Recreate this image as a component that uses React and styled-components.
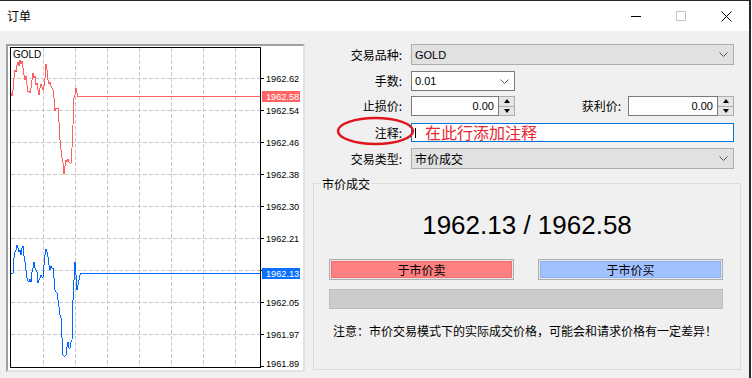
import React from "react";
import styled, { createGlobalStyle } from "styled-components";

const GlobalStyle = createGlobalStyle`
  html, body { margin: 0; padding: 0; background: #ffffff; }
  body { font-family: "Noto Sans CJK SC", "Noto Sans", sans-serif; color: #000; }
  * { box-sizing: border-box; }
`;

const CJK = `"Noto Sans CJK SC", "Noto Sans", sans-serif`;
const LATIN = `"Liberation Sans", "Noto Sans CJK SC", sans-serif`;

const Window = styled.div`
  width: 751px;
  height: 378px;
  border-top: 1px solid #262626;
  border-right: 2px solid #262626;
  background: #f0f0f0;
  display: flex;
  flex-direction: column;
  overflow: hidden;
`;

const TitleBar = styled.div`
  height: 30px;
  flex-shrink: 0;
  background: #ffffff;
  display: flex;
  align-items: center;
`;

const Title = styled.div`
  padding-left: 7px;
  font-family: ${CJK};
  font-size: 12px;
  line-height: 14px;
`;

const Controls = styled.div`
  margin-left: auto;
  display: flex;
  height: 100%;
`;

const CtrlButton = styled.div`
  width: ${(p) => p.$w}px;
  height: 100%;
  display: flex;
  align-items: center;
  justify-content: center;
`;

const Body = styled.div`
  flex: 1;
  display: flex;
  padding: 13px 0 0 6px;
`;

const ChartPanel = styled.div`
  width: 299px;
  height: 328px;
  flex-shrink: 0;
  border: 2px solid;
  border-color: #a0a0a0 #e3e3e3 #e3e3e3 #a0a0a0;
  background: #ffffff;
`;

const ChartSvg = styled.svg`
  display: block;
  width: 295px;
  height: 324px;
`;

const Form = styled.div`
  flex: 1;
  margin-left: 8px;
  display: flex;
  flex-direction: column;
`;

const Row = styled.div`
  position: relative;
  display: flex;
  align-items: center;
  height: ${(p) => p.$h}px;
  margin-top: ${(p) => p.$mt || 0}px;
  padding-right: 15px;
`;

const Label = styled.div`
  width: ${(p) => p.$w || 89}px;
  flex-shrink: 0;
  margin-right: ${(p) => p.$mr ?? 9}px;
  text-align: right;
  font-family: ${CJK};
  font-size: 12px;
  line-height: 16px;
  white-space: nowrap;
`;

const FlexLabel = styled(Label)`
  flex: 1;
  width: auto;
`;

const Select = styled.div`
  width: ${(p) => p.$w}px;
  height: 100%;
  display: flex;
  align-items: center;
  padding: 0 5px 0 3px;
  background: ${(p) => (p.$gray ? "#e1e1e1" : "#ffffff")};
  border: 1px solid ${(p) => (p.$gray ? "#adadad" : "#7a7a7a")};
  font-family: ${(p) => (p.$cjk ? CJK : LATIN)};
  font-size: ${(p) => (p.$cjk ? 12 : 11)}px;
  line-height: 14px;
`;

const SelectText = styled.span`
  flex: 1;
`;

const SpinWrap = styled.div`
  width: ${(p) => p.$w}px;
  height: 100%;
  display: flex;
  flex-shrink: 0;
`;

const SpinField = styled.div`
  flex: 1;
  border: 1px solid #7a7a7a;
  background: #ffffff;
  text-align: right;
  padding-right: 4px;
  font-family: ${LATIN};
  font-size: 11px;
  line-height: 18px;
`;

const SpinButtons = styled.div`
  width: 16px;
  display: flex;
  flex-direction: column;
  border: 1px solid #adadad;
  border-left: none;
  background: #e5e5e5;
`;

const SpinBtn = styled.div`
  flex: 1;
  display: flex;
  align-items: center;
  justify-content: center;
  & + & { border-top: 1px solid #adadad; }
  &::after {
    content: "";
    border-left: 3px solid transparent;
    border-right: 3px solid transparent;
    ${(p) => (p.$down ? "border-top: 4px solid #000;" : "border-bottom: 4px solid #000;")}
  }
`;

const TextInput = styled.div`
  flex: 1;
  height: 100%;
  border: 1px solid #0078d7;
  background: #ffffff;
  display: flex;
  align-items: center;
  padding-left: 3px;
`;

const Caret = styled.span`
  width: 1px;
  height: 10px;
  background: #000;
  margin-right: 9px;
`;

const NoteText = styled.span`
  font-family: ${CJK};
  font-size: 16px;
  line-height: 17px;
  color: #e8262c;
`;

const Ellipse = styled.svg`
  position: absolute;
  left: 24px;
  top: -6px;
  width: 77px;
  height: 28px;
  overflow: visible;
`;

const Group = styled.fieldset`
  margin: 7px 0 0 0;
  width: 428px;
  height: 194px;
  padding: 0;
  border: 1px solid #dcdcdc;
  display: flex;
  flex-direction: column;
  align-items: stretch;
`;

const Legend = styled.legend`
  margin-left: 7px;
  padding: 0 1px;
  font-family: ${CJK};
  font-size: 12px;
  line-height: 15px;
`;

const PriceText = styled.div`
  margin-top: 19px;
  text-align: center;
  font-family: ${LATIN};
  font-size: 26px;
  line-height: 30px;
`;

const GroupInner = styled.div`
  padding: 0 17px 0 15px;
  display: flex;
  flex-direction: column;
`;

const ButtonRow = styled.div`
  display: flex;
  justify-content: space-between;
  margin-top: 19px;
`;

const TradeButton = styled.div`
  width: 185px;
  height: 21px;
  border: 1px solid #adadad;
  background: ${(p) => p.$bg};
  box-shadow: inset 0 0 0 1px #e8e8e8, inset 0 0 0 2px ${(p) => p.$edge};
  display: flex;
  align-items: center;
  justify-content: center;
  font-family: ${CJK};
  font-size: 12px;
  line-height: 14px;
`;

const Progress = styled.div`
  margin-top: 9px;
  height: 20px;
  background: #cccccc;
  border: 1px solid #bcbcbc;
`;

const Notice = styled.div`
  margin-top: 14px;
  padding-left: 4px;
  font-family: ${CJK};
  font-size: 12px;
  line-height: 16px;
  white-space: nowrap;
`;

const Chevron = () => (
  <svg width="9" height="5" viewBox="0 0 9 5">
    <polyline points="0.5,0.5 4.5,4.5 8.5,0.5" fill="none" stroke="#555" strokeWidth="1" />
  </svg>
);

const Spin = ({ w, value }) => (
  <SpinWrap $w={w}>
    <SpinField>{value}</SpinField>
    <SpinButtons>
      <SpinBtn />
      <SpinBtn $down />
    </SpinButtons>
  </SpinWrap>
);

const redPts =
  "11,93 12,96 13,90 14,78 15,70 16,72 17,65 18,62 19,66 20,60 21,64 22,61 23,68 24,75 25,80 26,76 27,85 28,92 29,91 30,93 31,88 32,80 33,73 34,78 35,76 36,85 37,83 38,90 39,95 40,88 41,84 42,87 43,90 44,86 45,78 46,64 47,70 48,80 49,84 50,82 51,86 52,88 53,90 54,98 55,111 56,108 57,108 58,108 59,122 60,140 61,150 62,158 63,163 64,174 65,166 66,160 67,162 68,159 69,162 70,163 71,163 72,148 73,125 74,98 75,95 76,88 77,93 78,96.5 260,96.5";

const bluePts =
  "11,273 13,273 14,258 15,252 16,250 17,245 18,248 19,252 20,250 21,255 22,248 23,246 24,256 25,262 26,270 27,278 28,281 29,282 30,279 31,282 32,272 33,268 34,262 35,268 36,270 37,272 38,283 39,280 40,278 41,275 42,277 43,277 44,265 45,255 46,249 47,252 48,257 49,265 50,270 51,266 52,268 53,268 54,278 55,290 56,292 57,293 58,300 59,307 60,315 61,318 62,338 63,355 64,356 65,356 66,355 67,347 68,342 69,348 70,348 71,342 72,340 73,300 74,280 75,262 76,275 77,290 78,285 79,280 80,275 81,273.5 260,273.5";

const gridX = [43.5, 75.5, 107.5, 139.5, 171.5, 203.5, 235.5];
const gridY = [78.5, 110.5, 142.5, 174.5, 206.5, 238.5, 270.5, 302.5, 334.5];
const axisLabels = [
  [78.5, "1962.62"],
  [110.5, "1962.54"],
  [142.5, "1962.46"],
  [174.5, "1962.38"],
  [206.5, "1962.30"],
  [238.5, "1962.21"],
  [302.5, "1962.05"],
  [334.5, "1961.97"],
  [363.7, "1961.89"],
];

const Chart = () => (
  <ChartSvg viewBox="8 46 295 324">
    {gridX.map((x) => (
      <line key={x} x1={x} y1={48} x2={x} y2={367} stroke="#c8c8c8" strokeDasharray="4 2" />
    ))}
    {gridY.map((y) => (
      <line key={y} x1={11} y1={y} x2={260} y2={y} stroke="#c8c8c8" strokeDasharray="4 2" />
    ))}
    <rect x="10.5" y="47.5" width="250" height="320" fill="none" stroke="#000" />
    {[...gridY, 366.5].map((y) => (
      <line key={y} x1={261} y1={y} x2={264} y2={y} stroke="#000" />
    ))}
    {axisLabels.map(([y, t]) => (
      <text key={t} x={266} y={y + 3.3} fontFamily="Liberation Sans, sans-serif" fontSize="9.2" fill="#000">
        {t}
      </text>
    ))}
    <text x="13" y="58" fontFamily="Liberation Sans, sans-serif" fontSize="10" fill="#000">GOLD</text>
    <polyline points={redPts} fill="none" stroke="#ff5f5f" strokeWidth="1" shapeRendering="crispEdges" />
    <polyline points={bluePts} fill="none" stroke="#0066ff" strokeWidth="1" shapeRendering="crispEdges" />
    <rect x="262" y="91" width="38" height="11" fill="#ff6464" />
    <text x="266" y="99.8" fontFamily="Liberation Sans, sans-serif" fontSize="9.2" fill="#ffffff">1962.58</text>
    <rect x="262" y="268" width="38" height="11" fill="#0a70ff" />
    <text x="266" y="276.8" fontFamily="Liberation Sans, sans-serif" fontSize="9.2" fill="#ffffff">1962.13</text>
  </ChartSvg>
);

export default function App() {
  return (
    <>
      <GlobalStyle />
      <Window>
        <TitleBar>
          <Title>订单</Title>
          <Controls>
            <CtrlButton $w={45}>
              <svg width="10" height="1" viewBox="0 0 10 1"><rect width="10" height="1" fill="#000" /></svg>
            </CtrlButton>
            <CtrlButton $w={45}>
              <svg width="10" height="10" viewBox="0 0 10 10"><rect x="0.5" y="0.5" width="9" height="9" fill="none" stroke="#c8c8c8" /></svg>
            </CtrlButton>
            <CtrlButton $w={46}>
              <svg width="11" height="11" viewBox="0 0 11 11">
                <path d="M0.5 0.5 L10.5 10.5 M10.5 0.5 L0.5 10.5" stroke="#000" strokeWidth="1" />
              </svg>
            </CtrlButton>
          </Controls>
        </TitleBar>
        <Body>
          <ChartPanel>
            <Chart />
          </ChartPanel>
          <Form>
            <Row $h={21}>
              <Label>交易品种:</Label>
              <Select $w={323} $gray>
                <SelectText>GOLD</SelectText>
                <Chevron />
              </Select>
            </Row>
            <Row $h={20} $mt={6}>
              <Label>手数:</Label>
              <Select $w={104}>
                <SelectText>0.01</SelectText>
                <Chevron />
              </Select>
            </Row>
            <Row $h={20} $mt={5}>
              <Label>止损价:</Label>
              <Spin w={104} value="0.00" />
              <FlexLabel $mr={7}>获利价:</FlexLabel>
              <Spin w={106} value="0.00" />
            </Row>
            <Row $h={19} $mt={7}>
              <Label>注释:</Label>
              <TextInput>
                <Caret />
                <NoteText>在此行添加注释</NoteText>
              </TextInput>
              <Ellipse viewBox="0 0 77 28">
                <ellipse cx="38.5" cy="14" rx="37.5" ry="13" fill="none" stroke="#e0161e" strokeWidth="2.5" />
              </Ellipse>
            </Row>
            <Row $h={21} $mt={6}>
              <Label>交易类型:</Label>
              <Select $w={323} $gray $cjk>
                <SelectText>市价成交</SelectText>
                <Chevron />
              </Select>
            </Row>
            <Group>
              <Legend>市价成交</Legend>
              <PriceText>1962.13 / 1962.58</PriceText>
              <GroupInner>
                <ButtonRow>
                  <TradeButton $bg="#ff8080" $edge="#f07070">于市价卖</TradeButton>
                  <TradeButton $bg="#a0c0ff" $edge="#8cb0f5">于市价买</TradeButton>
                </ButtonRow>
                <Progress />
                <Notice>注意：市价交易模式下的实际成交价格，可能会和请求价格有一定差异！</Notice>
              </GroupInner>
            </Group>
          </Form>
        </Body>
      </Window>
    </>
  );
}
